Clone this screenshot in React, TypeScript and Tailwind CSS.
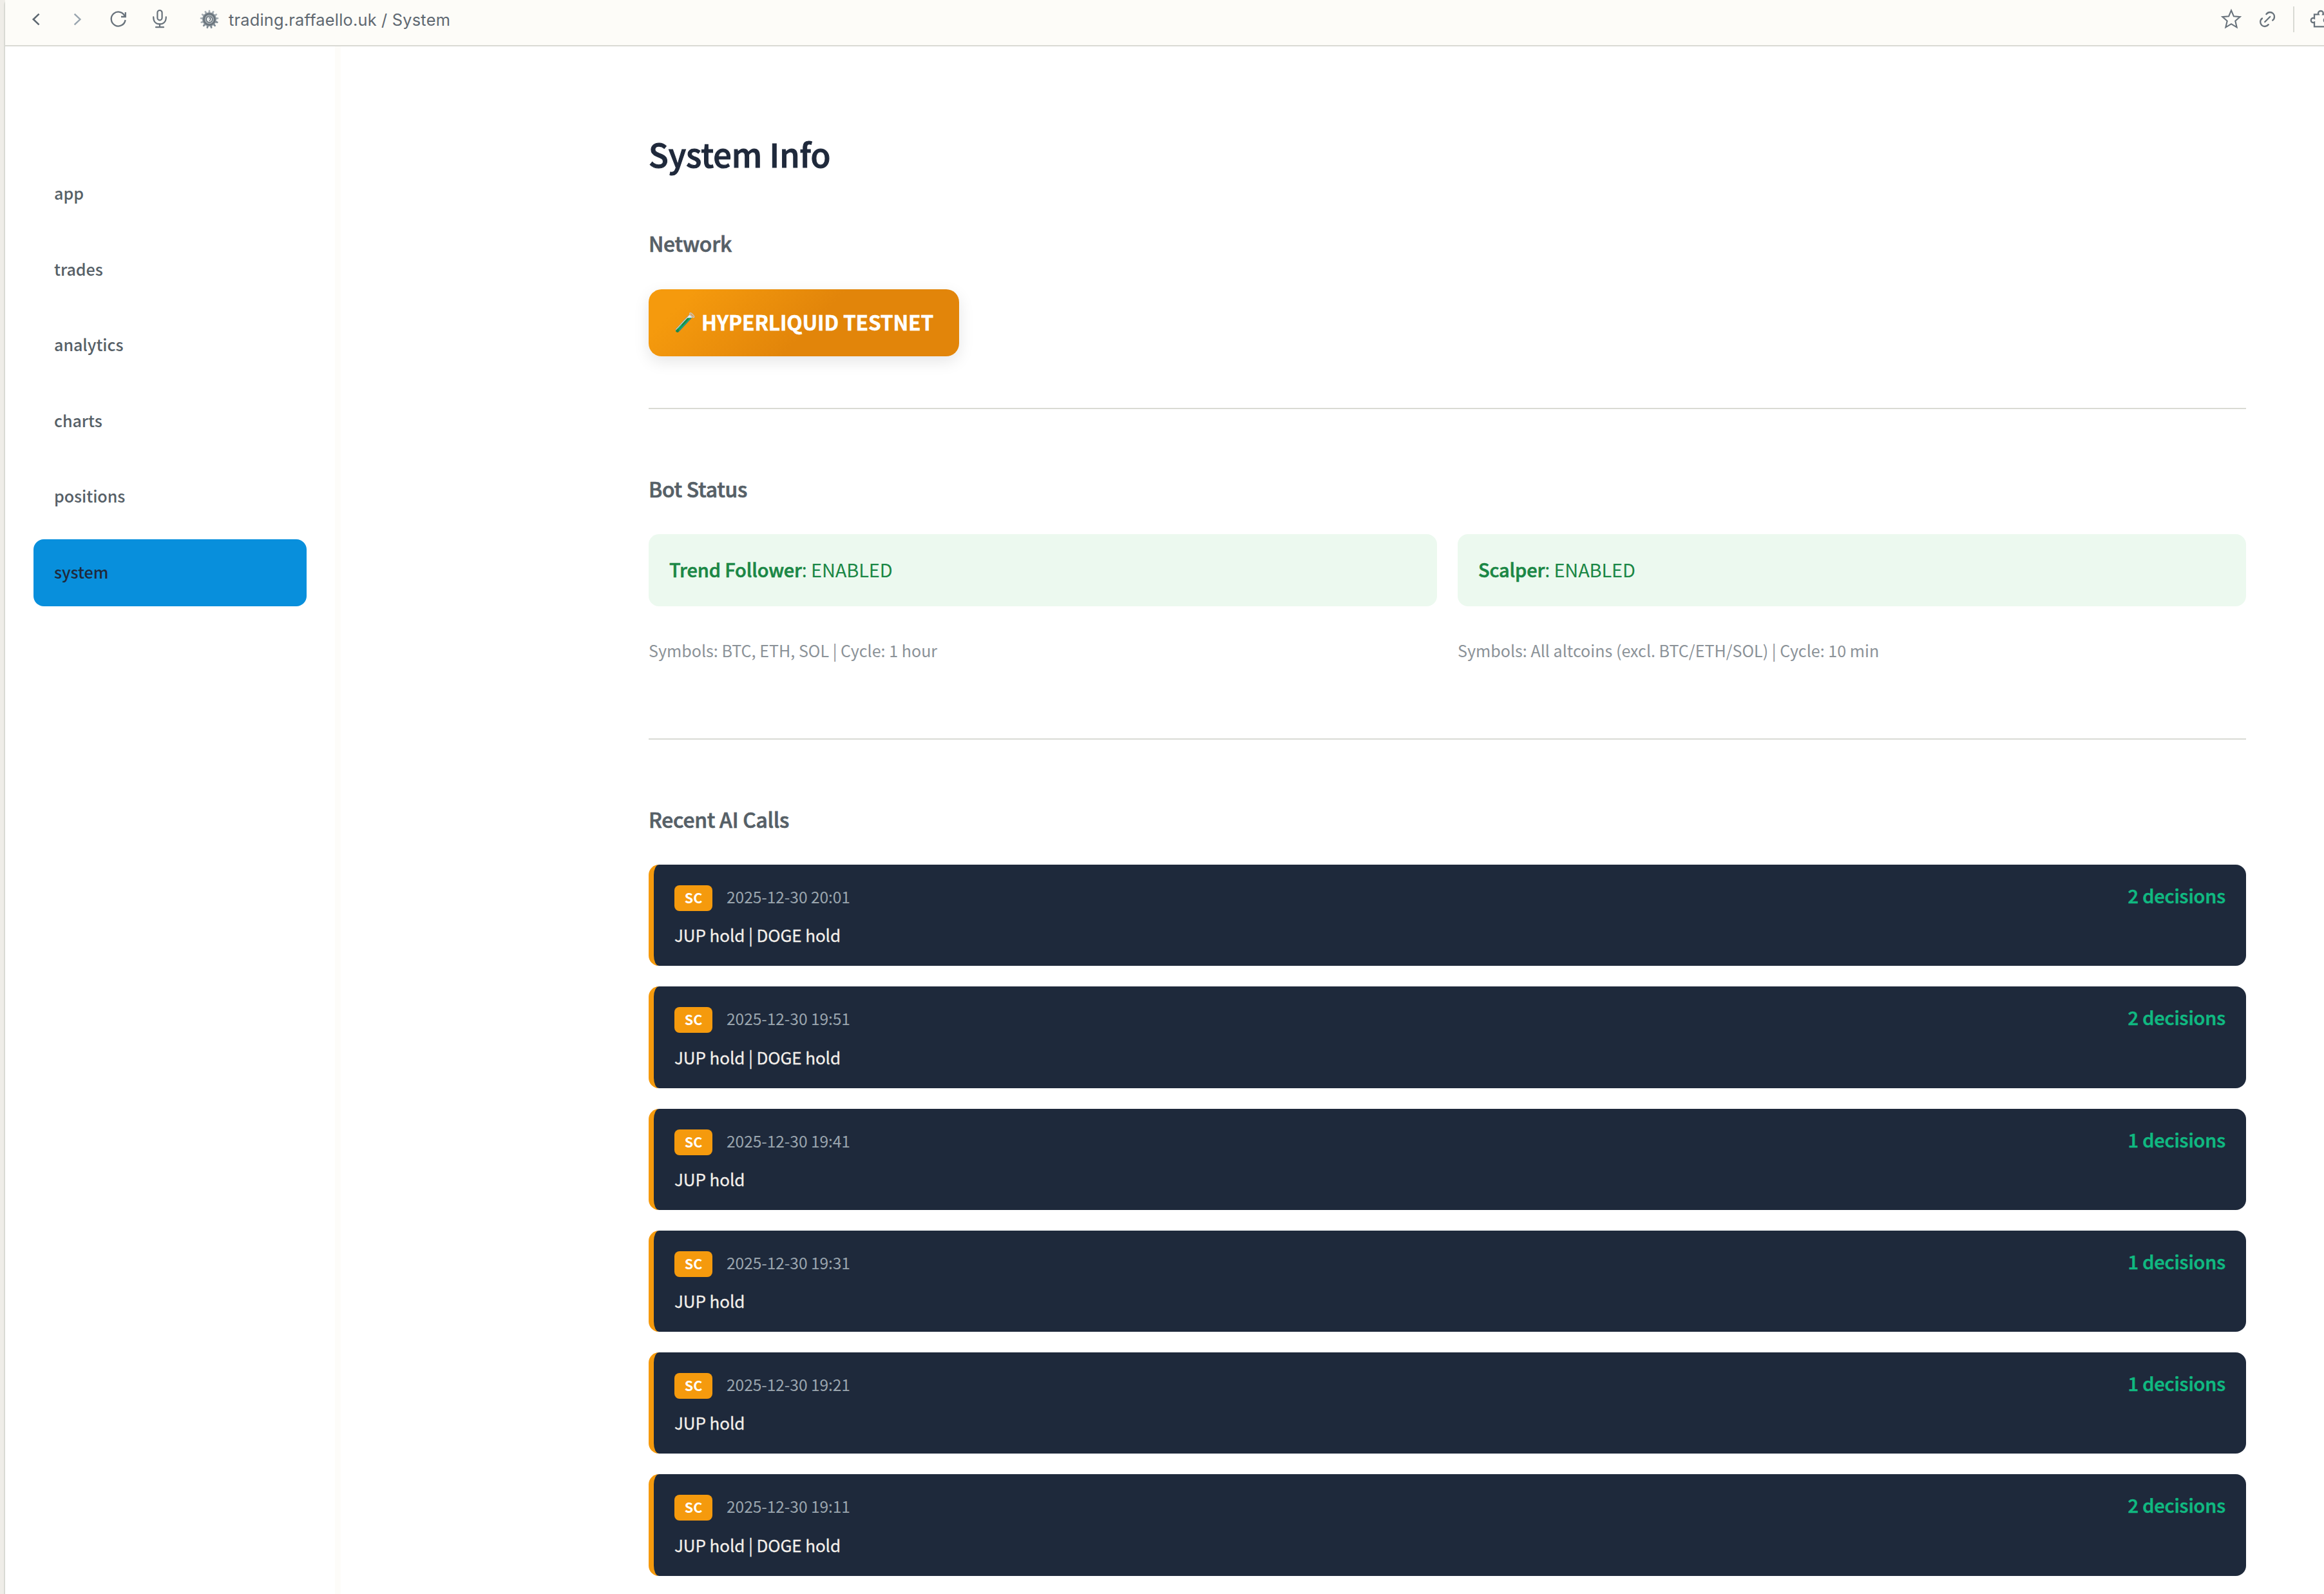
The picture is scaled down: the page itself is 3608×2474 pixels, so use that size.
interface AiCall {
  time: string;
  summary: string;
  decisions: number;
}

const NAV_ITEMS = ["app", "trades", "analytics", "charts", "positions", "system"];

const BOTS = [
  { name: "Trend Follower", info: "Symbols: BTC, ETH, SOL | Cycle: 1 hour" },
  { name: "Scalper", info: "Symbols: All altcoins (excl. BTC/ETH/SOL) | Cycle: 10 min" },
];

const CALLS: AiCall[] = [
  { time: "2025-12-30 20:01", summary: "JUP hold | DOGE hold", decisions: 2 },
  { time: "2025-12-30 19:51", summary: "JUP hold | DOGE hold", decisions: 2 },
  { time: "2025-12-30 19:41", summary: "JUP hold", decisions: 1 },
  { time: "2025-12-30 19:31", summary: "JUP hold", decisions: 1 },
  { time: "2025-12-30 19:21", summary: "JUP hold", decisions: 1 },
  { time: "2025-12-30 19:11", summary: "JUP hold | DOGE hold", decisions: 2 },
];

const GEAR_TEETH = Array.from({ length: 13 }, (_, i) => (i * 360) / 13);

function GearIcon() {
  return (
    <svg className="ml-[46px] h-9 w-[30px]" viewBox="-15 -18 30 36" fill="none">
      {GEAR_TEETH.map((angle) => (
        <path
          key={angle}
          d="M-1.7 -10 L-1.1 -14.3 H1.1 L1.7 -10 Z"
          fill={angle > 90 && angle < 230 ? "#7d8992" : "#a5adb3"}
          transform={`rotate(${angle})`}
        />
      ))}
      <circle r="10.8" fill="#8b959c" />
      <circle r="8.6" stroke="#68727a" strokeWidth="2.2" />
      <circle r="5.8" stroke="#a9b0b5" strokeWidth="1.6" />
      <circle r="4.2" fill="#eceeee" />
      <circle r="4.6" stroke="#5f6a72" strokeWidth="1.2" />
      <path d="M-1 -2.4 H1.6 V0.6 L0 2.6" stroke="#5f6a72" strokeWidth="1.4" />
    </svg>
  );
}

function TestTubeIcon() {
  return (
    <svg className="h-9 w-[35px]" viewBox="1047 481 35 36" fill="none">
      <g transform="translate(1051.4 513) rotate(-47)">
        <path d="M1 -3 H31 V3 H1 A3 3 0 0 1 1 -3 Z" fill="#e9ecec" stroke="#8b959c" strokeWidth="0.8" />
        <path d="M1 -1.8 H25 L29.6 2.8 H1 A2.6 2.6 0 0 1 -1.4 -1.8 Z" fill="#1a8a45" />
        <path d="M2 1.9 H28.5" stroke="#10b981" strokeWidth="1.5" />
        <path d="M3 -0.6 H11" stroke="#10b981" strokeWidth="1.2" />
        <path d="M0 2.9 H29" stroke="#566067" strokeWidth="0.7" />
        <ellipse cx="33" cy="0.4" rx="1.8" ry="4.6" fill="#e0a45a" stroke="#c4c8ca" strokeWidth="1.2" />
      </g>
    </svg>
  );
}

function Toolbar() {
  return (
    <header className="flex h-[72px] items-start border-b-2 border-[#d9dad4] bg-[#fdfcf8] pt-3 text-[#68727b]">
      <svg className="ml-9 h-9 w-6" viewBox="44 12 24 36" fill="none" stroke="#5d6770" strokeWidth="2.6">
        <path d="M60.6 21.6 L51.8 30 L60.6 38.4" />
      </svg>
      <svg className="ml-10 h-9 w-6" viewBox="108 12 24 36" fill="none" stroke="#98a4ae" strokeWidth="2.4">
        <path d="M115.6 21.6 L124.4 30 L115.6 38.4" />
      </svg>
      <svg className="ml-9 h-9 w-8" viewBox="168 12 32 36" fill="none" stroke="currentColor" strokeWidth="2.3">
        <path d="M194.6 31 A11 11 0 1 1 194 25.6" />
        <path d="M194.8 19 V26 H188" />
      </svg>
      <svg className="ml-8 h-9 w-8" viewBox="232 12 32 36" fill="none" stroke="currentColor" strokeWidth="2.2">
        <rect x="244.4" y="16" width="7.2" height="15.4" rx="3.6" />
        <path d="M238.2 26.4 C238.2 33.4 242 37.3 248 37.3 C254 37.3 257.8 33.4 257.8 26.4" strokeLinecap="round" />
        <path d="M248 37.3 V42 M242 42.2 H254" strokeLinecap="round" />
      </svg>
      <GearIcon />
      <span className="ml-[15px] font-[Inter,sans-serif] text-[25.4px] leading-[37px] font-normal tracking-[0.2px] whitespace-pre text-[#5f6871]">
        trading.raffaello.uk / System
      </span>
      <svg className="ml-auto h-9 w-8" viewBox="3448 12 32 36" fill="none" stroke="currentColor" strokeWidth="2.1">
        <path d="M3464 16.2 L3467.9 25.3 L3477.6 26.1 L3470.3 32.5 L3472.6 42.3 L3464 37.2 L3455.4 42.3 L3457.7 32.5 L3450.4 26.1 L3460.1 25.3 Z" />
      </svg>
      <svg
        className="ml-[26px] h-9 w-7"
        viewBox="3506 12 28 36"
        fill="none"
        stroke="currentColor"
        strokeWidth="2.3"
        strokeLinecap="round"
      >
        <path d="M3516.2 34 L3524.2 26" />
        <path d="M3518.4 22 C3519.8 20.2 3521.8 19 3524 19 C3528 19 3531 22 3531 25.9 C3531 28.2 3529.9 30.2 3528.2 31.5" />
        <path d="M3512 28.5 C3510.3 29.8 3509.2 31.8 3509.2 34.1 C3509.2 38 3512.2 41 3516.1 41 C3518.4 41 3520.4 39.8 3521.8 38.1" />
      </svg>
      <span className="ml-[26px] -mt-[2px] h-10 w-0.5 bg-[#d9dad4]" />
      <svg className="ml-[22px] h-9 w-6" viewBox="3584 12 24 36" fill="none" stroke="currentColor" strokeWidth="2.3">
        <path d="M3609 41.3 H3593 V34.5 C3590 36 3587.8 34 3587.8 31.4 C3587.8 28.8 3590 27 3593 28.6 V22.4 H3599.6 C3598 19.4 3600 17 3603 17 C3606 17 3607.6 19.4 3606.2 22.4 H3609" />
        <path d="M3609 29 C3607.4 30 3607.4 33 3609 34" />
      </svg>
    </header>
  );
}

function Sidebar() {
  return (
    <aside className="h-full w-[521px] shrink-0 border-r-[9px] border-[#fdfcf9] pt-[177px] pr-9 pl-11">
      <nav className="flex flex-col gap-[13.6px]">
        {NAV_ITEMS.map((item) => (
          <a
            key={item}
            className={
              item === "system"
                ? "flex h-[104px] w-[424px] items-center rounded-2xl bg-[#088fdc] pb-[2.4px] pl-8 text-[25.1px] font-medium tracking-[-0.05px] text-[#1f293b]"
                : "flex h-[104px] w-[424px] items-center rounded-2xl pb-[2.4px] pl-8 text-[25.1px] font-medium tracking-[-0.05px] text-[#566067]"
            }
          >
            {item}
          </a>
        ))}
      </nav>
    </aside>
  );
}

function SectionTitle({ children }: { children: string }) {
  return (
    <h2 className="text-[31.85px] leading-[44px] font-medium tracking-[-0.25px] text-[#566067] [-webkit-text-stroke:0.7px_#566067]">
      {children}
    </h2>
  );
}

function CallCard({ call }: { call: AiCall }) {
  return (
    <div className="flex h-[157.25px] items-start justify-between rounded-2xl border-l-8 border-[#f59a0d] bg-[#1e293b] px-8 pt-8">
      <div>
        <div className="flex items-start">
          <span className="h-10 w-[59px] rounded-lg bg-[#f59a0d] text-center text-[21.6px] leading-[37px] font-bold text-white">
            SC
          </span>
          <span className="ml-[22px] text-[24.6px] leading-[35px] tracking-[-0.08px] text-[#9aa5ae]">{call.time}</span>
        </div>
        <p className="mt-[17.4px] text-[26px] leading-10 tracking-[-0.1px] text-[#f3efea] [-webkit-text-stroke:0.3px_#f3efea]">
          {call.summary}
        </p>
      </div>
      <span className="text-[29px] leading-[31px] font-medium tracking-[-0.15px] text-[#10b981] [-webkit-text-stroke:0.6px_#10b981]">
        {call.decisions} decisions
      </span>
    </div>
  );
}

export default function App() {
  return (
    <div className="flex h-[2474px] w-[3608px] overflow-hidden bg-[#efede8] pl-1.5 font-['Noto_Sans_CJK_SC',sans-serif]">
      <div className="flex min-w-0 flex-1 flex-col rounded-tl-lg border-l-2 border-[#d9dad4] bg-white">
        <Toolbar />
        <div className="flex min-h-0 flex-1">
          <Sidebar />
          <main className="ml-[478px] w-[2480px] pt-[133px]">
            <h1 className="text-[50.4px] leading-[68px] font-medium text-[#1f293b] [-webkit-text-stroke:1.1px_#1f293b]">
              System Info
            </h1>

            <div className="mt-[82px]">
              <SectionTitle>Network</SectionTitle>
              <div className="mt-[50px] flex h-[104px] w-[482px] items-center gap-[7px] rounded-[20px] bg-[linear-gradient(135deg,#f59a0d_12%,#e2850a_53%)] pb-1 pl-10 shadow-[0_8px_24px_rgba(0,0,0,0.1)]">
                <TestTubeIcon />
                <span className="text-[31.7px] leading-[44px] font-bold tracking-[-0.15px] whitespace-nowrap text-white [-webkit-text-stroke:0.5px_#fff]">
                  HYPERLIQUID TESTNET
                </span>
              </div>
            </div>

            <hr className="mt-20 border-t-2 border-[#d9dad4]" />

            <div className="mt-[101px]">
              <SectionTitle>Bot Status</SectionTitle>
              <div className="mt-[49px] grid grid-cols-2 gap-8">
                {BOTS.map((bot) => (
                  <div key={bot.name}>
                    <div className="flex h-28 items-center rounded-2xl bg-[#ecf9ef] pb-[3px] pl-8 text-[29px] tracking-[-0.15px] whitespace-pre text-[#1a8745]">
                      <span className="font-medium [-webkit-text-stroke:0.6px_#1a8745]">{bot.name}</span>: ENABLED
                    </div>
                    <p className="mt-12 text-[25.1px] leading-10 text-[#8b9298]">{bot.info}</p>
                  </div>
                ))}
              </div>
            </div>

            <hr className="mt-[117px] border-t-2 border-[#d9dad4]" />

            <div className="mt-[101px]">
              <SectionTitle>Recent AI Calls</SectionTitle>
              <div className="mt-[49px] flex flex-col gap-8">
                {CALLS.map((call) => (
                  <CallCard key={call.time} call={call} />
                ))}
              </div>
            </div>
          </main>
        </div>
      </div>
    </div>
  );
}
